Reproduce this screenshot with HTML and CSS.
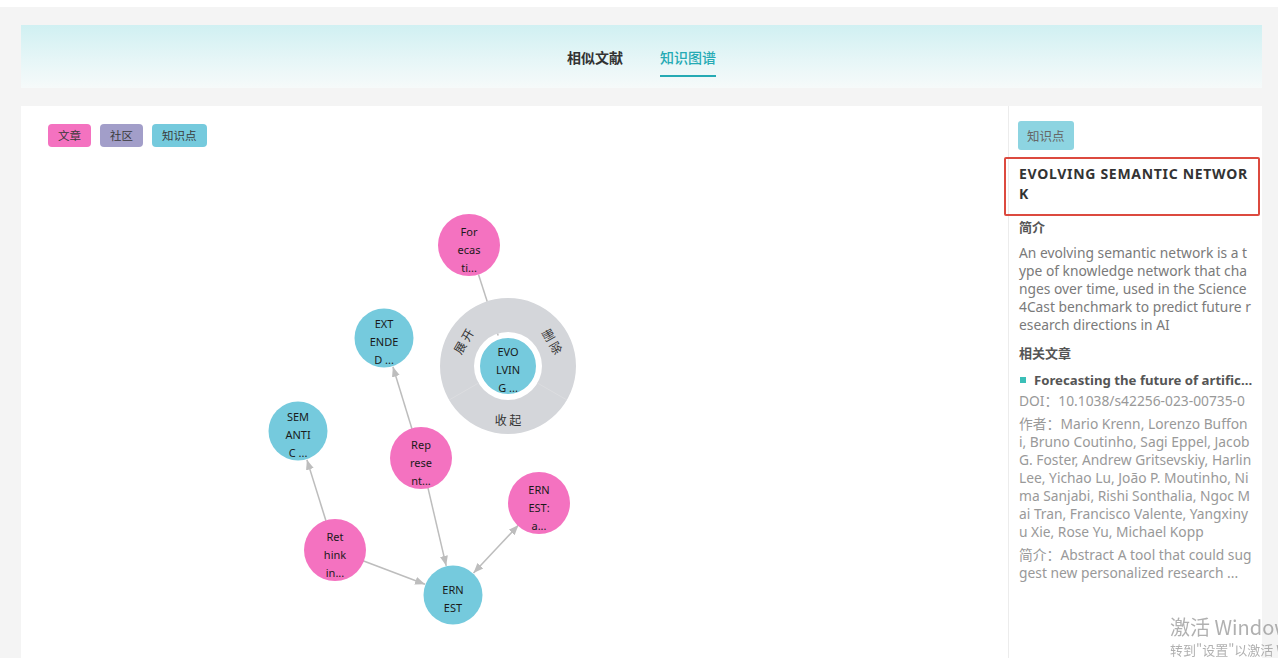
FILE: index.html
```html
<!DOCTYPE html>
<html lang="zh">
<head>
<meta charset="utf-8">
<title>知识图谱</title>
<link rel="stylesheet" href="styles.css">
</head>
<body>
<div class="topstrip"></div>
<div class="page">
  <div class="tabs-band">
    <div class="tab">相似文献</div>
    <div class="tab active">知识图谱</div>
  </div>
  <div class="main">
    <div class="graph-panel">
      <div class="legend">
        <span class="tag tag-article">文章</span>
        <span class="tag tag-community">社区</span>
        <span class="tag tag-knowledge">知识点</span>
      </div>
      <svg class="graph" viewBox="21 106 987 552" xmlns="http://www.w3.org/2000/svg">
        <defs>
          <marker id="arr" viewBox="0 0 10 10" refX="10" refY="5" markerWidth="10" markerHeight="10" markerUnits="userSpaceOnUse" orient="auto-start-reverse">
            <path d="M0,1 L10,5 L0,9 z" fill="#bdbdbd"/>
          </marker>
        </defs>
        <g class="edges">
          <line x1="478.5" y1="274.5" x2="498.8" y2="337.4"/>
          <line x1="412" y1="429" x2="392.9" y2="366.7" marker-end="url(#arr)"/>
          <line x1="326" y1="521" x2="306.9" y2="459.7" marker-end="url(#arr)"/>
          <line x1="427.8" y1="487.2" x2="446.2" y2="565.8" marker-end="url(#arr)"/>
          <line x1="363" y1="560.7" x2="425" y2="584.3" marker-end="url(#arr)"/>
          <line x1="473.5" y1="573.1" x2="518.5" y2="525.1" marker-start="url(#arr)" marker-end="url(#arr)"/>
        </g>
        <g class="ring">
          <path class="ring-bg" fill-rule="evenodd" d="M440,366 a68,68 0 1,0 136,0 a68,68 0 1,0 -136,0 z M474,366 a34,34 0 1,0 68,0 a34,34 0 1,0 -68,0 z"/>
          <line class="sep" x1="478.6" y1="383" x2="449.1" y2="400"/>
          <line class="sep" x1="537.4" y1="383" x2="566.9" y2="400"/>
          <text class="ring-label" transform="translate(463 341) rotate(-60)">展 开</text>
          <text class="ring-label" transform="translate(553 341) rotate(60)">删 除</text>
          <text class="ring-label" transform="translate(508 419)">收 起</text>
        </g>
        <g class="nodes">
          <circle class="n-art" cx="469" cy="245" r="31"/>
          <text class="nl"><tspan x="469" y="231">For</tspan><tspan x="469" y="249">ecas</tspan><tspan x="469" y="267">ti...</tspan></text>

          <circle class="n-kn center" cx="508" cy="366" r="30"/>
          <text class="nl"><tspan x="508" y="351">EVO</tspan><tspan x="508" y="369">LVIN</tspan><tspan x="508" y="387">G ...</tspan></text>

          <circle class="n-kn" cx="384" cy="338" r="29.5"/>
          <text class="nl"><tspan x="384" y="323">EXT</tspan><tspan x="384" y="341">ENDE</tspan><tspan x="384" y="359">D ...</tspan></text>

          <circle class="n-kn" cx="298" cy="431" r="29.5"/>
          <text class="nl"><tspan x="298" y="416">SEM</tspan><tspan x="298" y="434">ANTI</tspan><tspan x="298" y="452">C ...</tspan></text>

          <circle class="n-art" cx="421" cy="458" r="31"/>
          <text class="nl"><tspan x="421" y="444">Rep</tspan><tspan x="421" y="462">rese</tspan><tspan x="421" y="480">nt...</tspan></text>

          <circle class="n-art" cx="539" cy="503" r="31"/>
          <text class="nl"><tspan x="539" y="489">ERN</tspan><tspan x="539" y="507">EST:</tspan><tspan x="539" y="525">a...</tspan></text>

          <circle class="n-art" cx="335" cy="550" r="31"/>
          <text class="nl"><tspan x="335" y="536">Ret</tspan><tspan x="335" y="554">hink</tspan><tspan x="335" y="572">in...</tspan></text>

          <circle class="n-kn" cx="453" cy="595" r="29.5"/>
          <text class="nl"><tspan x="453" y="589">ERN</tspan><tspan x="453" y="607">EST</tspan></text>
        </g>
      </svg>
    </div>
    <aside class="side-panel">
      <span class="side-tag">知识点</span>
      <h2 class="node-title">EVOLVING SEMANTIC NETWORK</h2>
      <div class="label">简介</div>
      <p class="desc">An evolving semantic network is a type of knowledge network that changes over time, used in the Science4Cast benchmark to predict future research directions in AI</p>
      <div class="label label-gap">相关文章</div>
      <div class="article">
        <div class="article-title"><span class="bullet"></span><span class="article-name">Forecasting the future of artificial intelligence with machine learning-based link prediction</span></div>
        <div class="meta doi">DOI：10.1038/s42256-023-00735-0</div>
        <div class="meta authors">作者：Mario Krenn, Lorenzo Buffoni, Bruno Coutinho, Sagi Eppel, Jacob G. Foster, Andrew Gritsevskiy, Harlin Lee, Yichao Lu, João P. Moutinho, Nima Sanjabi, Rishi Sonthalia, Ngoc Mai Tran, Francisco Valente, Yangxinyu Xie, Rose Yu, Michael Kopp</div>
        <div class="meta abstract">简介：Abstract A tool that could suggest new personalized research ...</div>
      </div>
    </aside>
  </div>
</div>
<div class="watermark">
  <div class="wm-big">激活 Windows</div>
  <div class="wm-small">转到"设置"以激活 Windows。</div>
</div>
</body>
</html>
```

FILE: styles.css
```css
html, body {
  margin: 0;
  padding: 0;
  height: 100%;
  overflow: hidden;
}
body {
  background: #f4f4f4;
  font-family: "Noto Sans", "Noto Sans CJK SC", sans-serif;
  color: #333;
}
.topstrip {
  height: 7px;
  background: #ffffff;
}
.page {
  padding: 18px 16px 0 21px;
}
.tabs-band {
  height: 63px;
  background: linear-gradient(180deg, #d0f0f2 0%, #e6f6f7 55%, #f6fafa 100%);
  display: flex;
  justify-content: center;
  align-items: flex-start;
  gap: 37px;
}
.tab {
  margin-top: 22px;
  font-family: "Noto Sans CJK SC", sans-serif;
  font-size: 14px;
  font-weight: 700;
  line-height: 20px;
  color: #333;
  padding-bottom: 8px;
  border-bottom: 2px solid transparent;
}
.tab.active {
  color: #25aab4;
  border-bottom-color: #25aab4;
  font-weight: 500;
}
.main {
  margin-top: 18px;
  display: flex;
  height: 560px;
}
.graph-panel {
  position: relative;
  width: 987px;
  background: #fff;
}
.legend {
  position: relative;
  z-index: 1;
  display: flex;
  gap: 9px;
  padding: 18px 0 0 27px;
}
.tag {
  display: inline-block;
  height: 23px;
  line-height: 23px;
  padding: 0 10px;
  border-radius: 4px;
  font-family: "Noto Sans CJK SC", sans-serif;
  font-size: 11.5px;
  color: #3a3a3a;
}
.tag-article { background: #f472c0; }
.tag-community { background: #a29ec9; }
.tag-knowledge { background: #75cadd; }
.graph {
  position: absolute;
  left: 0;
  top: 0;
  width: 987px;
  height: 552px;
}
.edges line {
  stroke: #bdbdbd;
  stroke-width: 1.5;
}
.ring-bg {
  fill: #d4d6da;
}
.sep {
  stroke: #dcdde0;
  stroke-width: 1;
}
.ring-label {
  font-family: "Noto Sans CJK SC", sans-serif;
  font-size: 12px;
  fill: #333;
  text-anchor: middle;
  dominant-baseline: central;
}
.n-art { fill: #f472c0; }
.n-kn { fill: #75cadd; }
.n-kn.center {
  stroke: #ffffff;
  stroke-width: 4;
}
.nl {
  font-family: "Noto Sans", sans-serif;
  font-size: 11px;
  fill: #1a1a1a;
  text-anchor: middle;
  dominant-baseline: central;
}
.side-panel {
  width: 235px;
  background: #fff;
  border-left: 1px solid #ececec;
  padding: 15px 9px 0 9px;
  display: flex;
  flex-direction: column;
  align-items: flex-start;
  word-break: break-all;
}
.side-tag {
  display: inline-block;
  height: 29px;
  line-height: 29px;
  padding: 0 9px;
  background: #8dd4e1;
  border-radius: 3px;
  font-family: "Noto Sans CJK SC", sans-serif;
  font-size: 12.5px;
  color: #666;
}
.node-title {
  position: relative;
  margin: 14px 0 0 1px;
  font-size: 14px;
  font-weight: 700;
  line-height: 20px;
  letter-spacing: 0.7px;
  color: #333;
  width: 234px;
}
.node-title::after {
  content: "";
  position: absolute;
  left: -15px;
  right: -7px;
  top: -7px;
  bottom: -12px;
  border: 2px solid #dc4a3f;
  border-radius: 2px;
}
.label {
  margin: 14px 0 0 1px;
  font-family: "Noto Sans CJK SC", sans-serif;
  font-size: 13px;
  font-weight: 700;
  line-height: 18px;
  color: #555;
}
.label-gap {
  margin-top: 10px;
}
.desc {
  margin: 8px 0 0 1px;
  width: 234px;
  font-size: 13.8px;
  line-height: 18px;
  color: #7a7a7a;
}
.article {
  margin: 8px 0 0 1px;
  width: 234px;
}
.article-title {
  display: flex;
  align-items: center;
  gap: 8px;
  font-size: 13.2px;
  font-weight: 700;
  line-height: 20px;
  color: #555;
  word-break: normal;
}
.bullet {
  flex: 0 0 6px;
  width: 6px;
  height: 6px;
  background: #3bbfb8;
  margin-left: 1px;
}
.article-name {
  white-space: nowrap;
  overflow: hidden;
  text-overflow: ellipsis;
}
.meta {
  font-size: 13.8px;
  line-height: 18px;
  color: #999;
}
.doi { margin-top: 2px; white-space: nowrap; overflow: hidden; }
.authors { margin-top: 5px; }
.abstract { margin-top: 5px; }
.watermark {
  position: fixed;
  left: 1170px;
  top: 614px;
  white-space: nowrap;
  color: rgba(150, 150, 150, 0.75);
  font-family: "Noto Sans CJK SC", sans-serif;
  pointer-events: none;
}
.wm-big {
  font-size: 20px;
  line-height: 26px;
}
.wm-small {
  font-size: 13px;
  line-height: 20px;
}
```
